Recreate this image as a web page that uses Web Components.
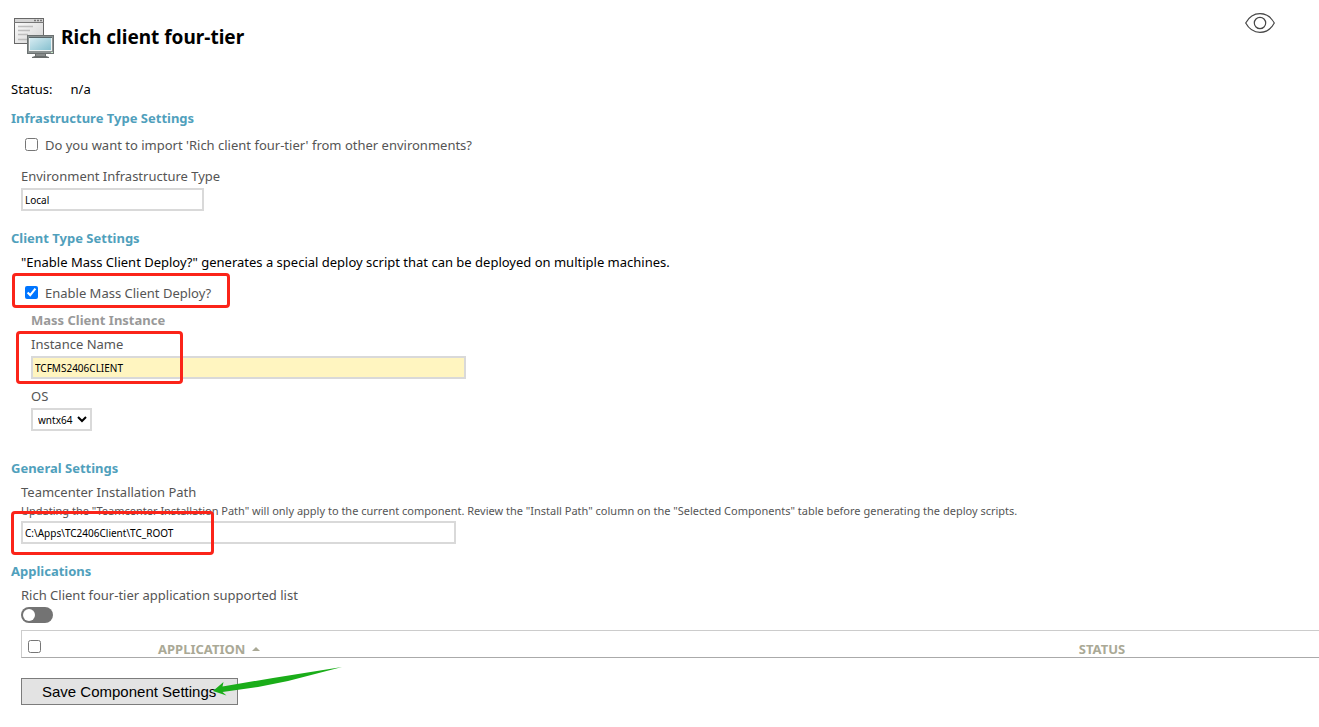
<!DOCTYPE html>
<html lang="en">
<head>
<meta charset="utf-8">
<title>Rich client four-tier</title>
<style>
    body {
        margin: 0;
        background: #fff;
        color: #000;
        font: 13px/24px "Noto Sans", "Open Sans", sans-serif;
        overflow-x: hidden;
    }
</style>
</head>
<body>
<component-panel>
    <component-header slot="header" title-text="Rich client four-tier"></component-header>
    <status-line slot="header" label="Status:">n/a</status-line>

    <settings-section heading="Infrastructure Type Settings">
        <check-field label="Do you want to import 'Rich client four-tier' from other environments?"></check-field>
        <text-field class="spaced" label="Environment Infrastructure Type" value="Local" size="small"></text-field>
    </settings-section>

    <settings-section heading="Client Type Settings">
        <div>"Enable Mass Client Deploy?" generates a special deploy script that can be deployed on multiple machines.</div>
        <check-field class="spaced" label="Enable Mass Client Deploy?" checked>
            <callout-frame style="left: -9px; top: -5px; width: 218px; height: 35px"></callout-frame>
        </check-field>
        <settings-group heading="Mass Client Instance">
            <text-field label="Instance Name" value="TCFMS2406CLIENT" required>
                <callout-frame style="left: -15px; top: -1px; width: 167px; height: 53px"></callout-frame>
            </text-field>
            <select-field label="OS" value="wntx64"></select-field>
        </settings-group>
    </settings-section>

    <settings-section heading="General Settings">
        <text-field label="Teamcenter Installation Path" value="C:\Apps\TC2406Client\TC_ROOT"
            note="Updating the &quot;Teamcenter Installation Path&quot; will only apply to the current component. Review the &quot;Install Path&quot; column on the &quot;Selected Components&quot; table before generating the deploy scripts.">
            <callout-frame style="left: -10px; top: 31px; width: 203px; height: 44px"></callout-frame>
        </text-field>
    </settings-section>

    <settings-section heading="Applications">
        <toggle-field label="Rich Client four-tier application supported list"></toggle-field>
        <application-table></application-table>
    </settings-section>

    <save-button slot="footer">Save Component Settings</save-button>
</component-panel>

<script>
class ComponentPanel extends HTMLElement {
    connectedCallback() {
        this.attachShadow({ mode: 'open' });
        this.shadowRoot.innerHTML = `
            <style>
                :host { display: block; padding: 13px 0 22px 11px; }
                .sections { display: flex; flex-direction: column; gap: 15px; margin-bottom: 20px; }
            </style>
            <slot name="header"></slot>
            <div class="sections"><slot></slot></div>
            <slot name="footer"></slot>
        `;
    }
}

class ComponentHeader extends HTMLElement {
    connectedCallback() {
        this.attachShadow({ mode: 'open' });
        this.shadowRoot.innerHTML = `
            <style>
                :host {
                    display: flex;
                    align-items: flex-start;
                    justify-content: space-between;
                    padding-right: 44px;
                    height: 64px;
                }
                .title { display: flex; align-items: center; gap: 7px; padding-left: 2px; }
                h1 { margin: 0; font-size: 19px; line-height: 48px; }
                button { display: block; border: 0; padding: 0; background: none; }
                svg { display: block; }
            </style>
            <div class="title">
                <svg width="41" height="48" viewBox="0 0 41 48" aria-hidden="true">
                    <defs>
                        <linearGradient id="page" x1="0" y1="0" x2="1" y2="1">
                            <stop offset="0" stop-color="#fff"/><stop offset="1" stop-color="#d2d2d2"/>
                        </linearGradient>
                        <linearGradient id="screen" x1="0" y1="0" x2="1" y2="1">
                            <stop offset="0" stop-color="#d9edf3"/><stop offset="1" stop-color="#84bfce"/>
                        </linearGradient>
                    </defs>
                    <rect x="1.5" y="5.5" width="29" height="25" fill="url(#page)" stroke="#686868"/>
                    <path d="M2 6h28v3H2z" fill="#d4d4d4"/>
                    <path d="M1 9.500h30" stroke="#777"/>
                    <path d="M21 7.500h2m1 0h2m1 0h2" stroke="#777" stroke-width="1.500"/>
                    <path d="M5 13.500h15M5 17.500h12M5 21.500h10M5 26.500h9" stroke="#bdbdbd" stroke-width="1.400"/>
                    <rect x="14.500" y="22.500" width="26" height="18" fill="#8c9292" stroke="#6b7171"/>
                    <rect x="16.500" y="24.500" width="22" height="13" fill="url(#screen)" stroke="#eef3f3"/>
                    <rect x="16" y="24" width="23" height="1" fill="#59686b"/>
                    <path d="M22 41h11v2l3 1v1H19v-1l3-1z" fill="#686c6c"/>
                    <path d="M23 42h9" stroke="#a8acac"/>
                    <path d="M38 39.500h2" stroke="#c7eac8"/>
                </svg>
                <h1></h1>
            </div>
            <button type="button" aria-label="Show details">
                <svg width="30" height="20" viewBox="0 0 30 20" fill="none" stroke="#464646" stroke-width="1.200">
                    <path d="M.700 10C4 4 9 .700 15 .700S26 4 29.300 10C26 16 21 19.300 15 19.300S4 16 .700 10z"/>
                    <circle cx="15" cy="10" r="5.700"/>
                </svg>
            </button>
        `;
        this.shadowRoot.querySelector('h1').textContent = this.getAttribute('title-text');
    }
}

class StatusLine extends HTMLElement {
    connectedCallback() {
        this.attachShadow({ mode: 'open' });
        this.shadowRoot.innerHTML = `
            <style>
                :host { display: flex; gap: 18px; margin-bottom: 5px; }
            </style>
            <span>${this.getAttribute('label')}</span>
            <span><slot></slot></span>
        `;
    }
}

class SettingsSection extends HTMLElement {
    connectedCallback() {
        this.attachShadow({ mode: 'open' });
        this.shadowRoot.innerHTML = `
            <style>
                :host { display: block; }
                h2 { margin: 0; font-size: 13px; line-height: 24px; color: #50a0bc; }
                .body { padding-left: 10px; }
                ::slotted(.spaced) { margin-top: 4px; }
            </style>
            <h2>${this.getAttribute('heading')}</h2>
            <div class="body"><slot></slot></div>
        `;
    }
}

class SettingsGroup extends HTMLElement {
    connectedCallback() {
        this.attachShadow({ mode: 'open' });
        this.shadowRoot.innerHTML = `
            <style>
                :host { display: block; padding: 0 0 10px 10px; }
                h3 { margin: 0; font-size: 13px; line-height: 24px; color: #999; }
                .fields { display: flex; flex-direction: column; gap: 5px; }
            </style>
            <h3>${this.getAttribute('heading')}</h3>
            <div class="fields"><slot></slot></div>
        `;
    }
}

class CheckField extends HTMLElement {
    connectedCallback() {
        this.attachShadow({ mode: 'open' });
        this.shadowRoot.innerHTML = `
            <style>
                :host { display: block; position: relative; color: #555; }
                label { display: flex; align-items: center; gap: 7px; height: 30px; }
                input { width: 13px; height: 13px; margin: 0 0 2px 4px; }
            </style>
            <label><input type="checkbox"><span></span></label>
            <slot></slot>
        `;
        this.shadowRoot.querySelector('span').textContent = this.getAttribute('label');
        this.shadowRoot.querySelector('input').checked = this.hasAttribute('checked');
    }
}

class TextField extends HTMLElement {
    connectedCallback() {
        this.attachShadow({ mode: 'open' });
        this.shadowRoot.innerHTML = `
            <style>
                :host { display: block; position: relative; color: #555; }
                label { display: block; }
                .note { padding-bottom: 4px; font-size: 11px; line-height: 13px; }
                .note:empty { display: none; }
                input {
                    display: block;
                    box-sizing: border-box;
                    width: 435px;
                    max-width: 100%;
                    height: 23px;
                    padding: 0 2px;
                    border: 2px solid #d9d9d9;
                    background: #fff;
                    color: #000;
                    font: 10px "Noto Sans", "Open Sans", sans-serif;
                }
                :host([size="small"]) input { width: 183px; }
                :host([required]) input { background: #fff5c0; }
            </style>
            <label for="field"></label>
            <div class="note"></div>
            <input id="field" type="text">
            <slot></slot>
        `;
        this.shadowRoot.querySelector('label').textContent = this.getAttribute('label');
        this.shadowRoot.querySelector('.note').textContent = this.getAttribute('note') || '';
        this.shadowRoot.querySelector('input').value = this.getAttribute('value');
    }
}

class SelectField extends HTMLElement {
    connectedCallback() {
        this.attachShadow({ mode: 'open' });
        this.shadowRoot.innerHTML = `
            <style>
                :host { display: block; color: #555; }
                label { display: block; }
                select {
                    display: block;
                    box-sizing: border-box;
                    width: 61px;
                    height: 23px;
                    padding: 0 0 0 1px;
                    border: 2px solid #d9d9d9;
                    border-radius: 0;
                    background: #fff;
                    color: #000;
                    font: 10px "Noto Sans", "Open Sans", sans-serif;
                }
            </style>
            <label for="choice">${this.getAttribute('label')}</label>
            <select id="choice"><option>${this.getAttribute('value')}</option></select>
        `;
    }
}

class ToggleField extends HTMLElement {
    connectedCallback() {
        this.attachShadow({ mode: 'open' });
        this.shadowRoot.innerHTML = `
            <style>
                :host { display: block; margin-bottom: 7px; color: #555; }
                label { display: block; }
                input {
                    appearance: none;
                    display: flex;
                    align-items: center;
                    width: 32px;
                    height: 16px;
                    margin: 0;
                    padding: 0 2px;
                    border-radius: 8px;
                    background: #737373;
                }
                input::before {
                    content: "";
                    width: 12px;
                    height: 12px;
                    border-radius: 50%;
                    background: #fff;
                }
                input:checked { justify-content: flex-end; background: #50a0bc; }
            </style>
            <label for="toggle">${this.getAttribute('label')}</label>
            <input id="toggle" type="checkbox" role="switch">
        `;
    }
}

class ApplicationTable extends HTMLElement {
    connectedCallback() {
        this.attachShadow({ mode: 'open' });
        this.shadowRoot.innerHTML = `
            <style>
                :host { display: block; }
                table {
                    width: 100%;
                    table-layout: fixed;
                    border-collapse: separate;
                    border-spacing: 0;
                    border: solid #ccc;
                    border-width: 1px 0 1px 1px;
                    border-bottom-color: #aaa;
                }
                th { height: 26px; padding: 0; text-align: left; font-size: 13px; line-height: 16px; color: #aaa996; vertical-align: bottom; }
                .check { width: 136px; vertical-align: middle; }
                .name { width: 71%; }
                input { display: block; width: 13px; height: 13px; margin: 4px 0 0 6px; }
                .sort { display: flex; align-items: center; gap: 7px; }
                .sort::after {
                    content: "";
                    border: 4px solid transparent;
                    border-top: 0;
                    border-bottom-color: #aaa996;
                }
            </style>
            <table>
                <thead>
                    <tr>
                        <th class="check"><input type="checkbox" aria-label="Select all"></th>
                        <th class="name" aria-sort="ascending"><span class="sort">APPLICATION</span></th>
                        <th>STATUS</th>
                    </tr>
                </thead>
            </table>
        `;
    }
}

class SaveButton extends HTMLElement {
    connectedCallback() {
        this.attachShadow({ mode: 'open' });
        this.shadowRoot.innerHTML = `
            <style>
                :host { display: block; position: relative; width: fit-content; margin-left: 10px; }
                button {
                    display: block;
                    height: 27px;
                    padding: 0 21px 0 20px;
                    border: 1px solid #7c7c7c;
                    border-radius: 0;
                    background: #e3e3e3;
                    color: #000;
                    font: 15px "Liberation Sans", Arial, sans-serif;
                }
                /* arrow drawn over the button's right edge */
                svg { position: absolute; right: -105px; top: -12px; pointer-events: none; }
            </style>
            <button type="button"><slot></slot></button>
            <svg width="130" height="32" viewBox="0 0 130 32" aria-hidden="true">
                <path d="M0 25L10.500 16L9.500 20.500L60 12L129 1L75 15L45 21L9.500 26L13.500 29.500z" fill="#1aad19"/>
            </svg>
        `;
    }
}

class CalloutFrame extends HTMLElement {
    connectedCallback() {
        this.attachShadow({ mode: 'open' });
        this.shadowRoot.innerHTML = `
            <style>
                :host {
                    position: absolute;
                    box-sizing: border-box;
                    border: 3px solid #fb2419;
                    border-radius: 4px;
                    pointer-events: none;
                }
            </style>
        `;
    }
}

customElements.define('component-panel', ComponentPanel);
customElements.define('component-header', ComponentHeader);
customElements.define('status-line', StatusLine);
customElements.define('settings-section', SettingsSection);
customElements.define('settings-group', SettingsGroup);
customElements.define('check-field', CheckField);
customElements.define('text-field', TextField);
customElements.define('select-field', SelectField);
customElements.define('toggle-field', ToggleField);
customElements.define('application-table', ApplicationTable);
customElements.define('save-button', SaveButton);
customElements.define('callout-frame', CalloutFrame);
</script>
</body>
</html>
